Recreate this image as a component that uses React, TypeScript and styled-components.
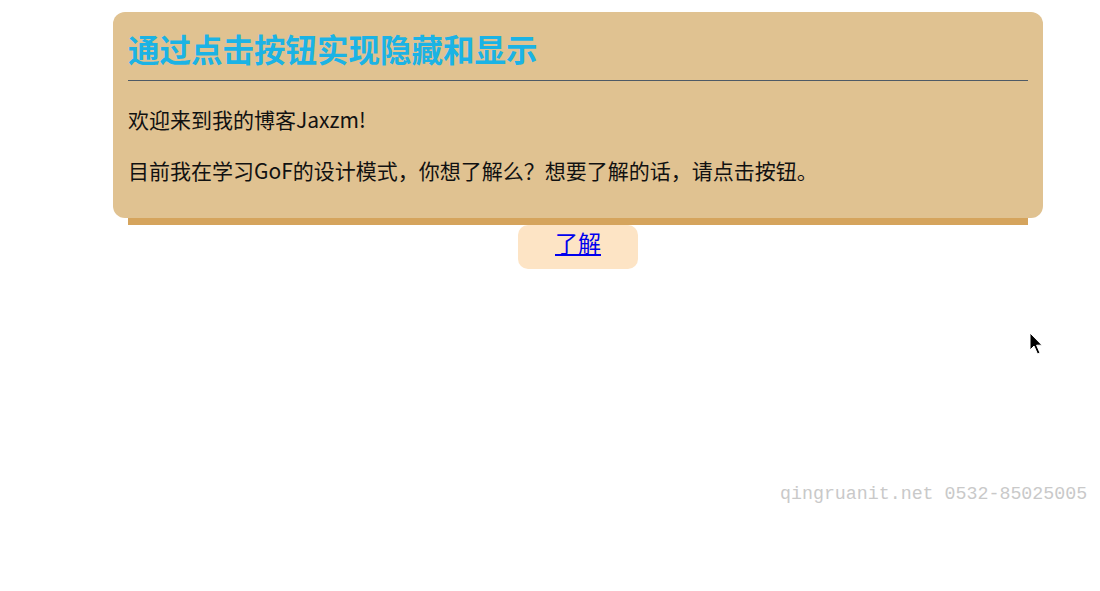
import { createGlobalStyle } from "styled-components";
import styled from "styled-components";

const GlobalStyle = createGlobalStyle`
    html, body {
        margin: 0;
        padding: 0;
        background: #ffffff;
    }
    body {
        font-family: "Noto Sans CJK SC", "Noto Sans", sans-serif;
    }
`;

const Page = styled.div`
    position: relative;
    width: 1100px;
    height: 591px;
    overflow: hidden;
    padding-top: 12px;
    box-sizing: border-box;
`;

const Wrapper = styled.div`
    width: 930px;
    margin-left: 113px;
    display: flex;
    flex-direction: column;
    align-items: center;
`;

const Card = styled.section`
    width: 100%;
    box-sizing: border-box;
    background: #e0c291;
    border-radius: 12px;
    padding: 14px 15px 33px;
`;

const Title = styled.h1`
    margin: 0;
    font-size: 31.5px;
    line-height: 44px;
    font-weight: 700;
    color: #1bb3e5;
`;

const Rule = styled.hr`
    margin: 10px 0 0;
    border: none;
    height: 1px;
    background: #4e5a66;
`;

const Text = styled.p<{ $gap: number }>`
    margin: ${(p) => p.$gap}px 0 0;
    font-size: 21px;
    line-height: 30px;
    color: #111;
`;

const Ledge = styled.div`
    align-self: stretch;
    margin: 0 15px;
    height: 7px;
    background: #d5a45d;
`;

const ToggleButton = styled.div`
    width: 120px;
    height: 44px;
    background: #fde4c5;
    border-radius: 10px;
    display: flex;
    justify-content: center;
    align-items: center;

    a {
        font-size: 23px;
        line-height: 1;
        color: #0000ee;
        text-decoration: underline;
        margin-top: -10px;
    }
`;

const Watermark = styled.div`
    position: absolute;
    left: 780px;
    top: 482px;
    font-family: "Liberation Mono", "DejaVu Sans Mono", monospace;
    font-size: 18.3px;
    line-height: 24px;
    color: #c9c9c9;
    white-space: nowrap;
`;

const Cursor = styled.svg`
    position: absolute;
    left: 1029px;
    top: 332px;
`;

export default function App() {
    return (
        <>
            <GlobalStyle />
            <Page>
                <Wrapper>
                    <Card>
                        <Title>通过点击按钮实现隐藏和显示</Title>
                        <Rule />
                        <Text $gap={23}>欢迎来到我的博客Jaxzm!</Text>
                        <Text $gap={21}>
                            目前我在学习GoF的设计模式，你想了解么？想要了解的话，请点击按钮。
                        </Text>
                    </Card>
                    <Ledge />
                    <ToggleButton>
                        <a href="#">了解</a>
                    </ToggleButton>
                </Wrapper>
                <Watermark>qingruanit.net 0532-85025005</Watermark>
                <Cursor width="16" height="26" viewBox="0 0 16 26">
                    <path
                        d="M1 1 L1 18 L5 14 L8.5 22 L11 21 L7.6 13.2 L13 13.2 Z"
                        fill="#000"
                        stroke="#fff"
                        strokeWidth="1"
                    />
                </Cursor>
            </Page>
        </>
    );
}
